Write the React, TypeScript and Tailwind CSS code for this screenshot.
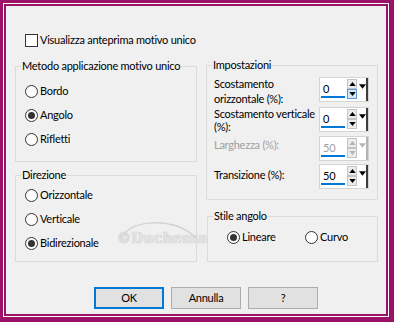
import type { ReactNode } from 'react'

function Radio({ label, checked = false, className = '' }: { label: string; checked?: boolean; className?: string }) {
  return (
    <div className={`flex h-[16px] items-center ${className}`}>
      <span className="flex h-[13px] w-[13px] shrink-0 items-center justify-center rounded-full border border-[#333333] bg-white">
        {checked && <span className="h-[7px] w-[7px] rounded-full bg-[#333333]" />}
      </span>
      <span className="ml-[2px] whitespace-nowrap leading-[16px]">{label}</span>
    </div>
  )
}

function Group({ title, className, children }: { title: string; className: string; children: ReactNode }) {
  return (
    <fieldset className={`min-w-0 border border-[#dcdcdc] ${className}`}>
      <legend className="ml-[5px] whitespace-nowrap px-[1px] leading-[16px]">{title}</legend>
      {children}
    </fieldset>
  )
}

function Spin({ value, disabled = false, hot = false }: { value: string; disabled?: boolean; hot?: boolean }) {
  const arrow = disabled ? 'fill-[#b4b4b4]' : 'fill-black'
  return (
    <div className="flex h-[25px] w-[50px] border border-[#d4d4d4] bg-white">
      <div className="flex w-[27px] flex-col pl-[1px] pt-[4px]">
        <span className={`pl-[2px] leading-[14px] ${disabled ? 'text-[#a0a0a0]' : 'text-black'}`}>{value}</span>
        <span className="mt-auto mb-[3px] h-[2px] w-[24px] bg-[#0078d7]" />
      </div>
      <div className="flex flex-col pl-[1px] pt-[1px]">
        <span className="flex h-[10px] w-[10px] items-center justify-center border border-[#c4c4c4] bg-[#ececec]">
          <svg viewBox="0 0 8 5" className={`h-[4px] w-[7px] ${arrow}`}>
            <path d="M4 0 8 5H0z" />
          </svg>
        </span>
        <span
          className={`flex h-[10px] w-[10px] items-center justify-center border ${
            hot ? 'border-[#5a9ad8] bg-[#d5e7f7]' : 'border-[#c4c4c4] bg-[#ececec]'
          }`}
        >
          <svg viewBox="0 0 8 5" className={`h-[4px] w-[7px] ${arrow}`}>
            <path d="M0 0h8L4 5z" />
          </svg>
        </span>
      </div>
      <div
        className={`ml-[1px] flex w-[10px] items-start justify-center border-r-2 pt-[6px] ${
          disabled ? 'border-[#b4b4b4]' : 'border-[#3c3c3c]'
        }`}
      >
        <svg viewBox="0 0 8 5" className={`h-[5px] w-[7px] ${arrow}`}>
          <path d="M0 0h8L4 5z" />
        </svg>
      </div>
    </div>
  )
}

function Button({ label, primary = false }: { label: string; primary?: boolean }) {
  return (
    <button
      type="button"
      className={`flex h-[22px] w-[70px] items-center justify-center bg-[#e1e1e1] leading-[16px] ${
        primary ? 'border-2 border-[#0078d7]' : 'border border-[#adadad]'
      }`}
    >
      {label}
    </button>
  )
}

export default function App() {
  return (
    <div className="h-[322px] w-[394px] bg-[#9a1167] pt-[3px] pl-[3px] pr-[5px] pb-[5px]">
      <div className="h-full w-full border border-white">
        <div className="h-full w-full border-2 border-[#9a1167]">
          <div className="relative flex h-full w-full flex-col bg-[#f0f0f0] pl-[9px] pr-[6px] pt-[26px] font-['Lato',sans-serif] text-[11px] tracking-[-0.25px] text-black">
            <div className="ml-[10px] flex h-[16px] items-center">
              <span className="h-[13px] w-[13px] border border-[#333333] bg-white" />
              <span className="ml-[2px] leading-[16px]">Visualizza anteprima motivo unico</span>
            </div>

            <div className="mt-[10px] flex gap-[9px]">
              <div className="flex w-[182px] flex-col gap-[5px]">
                <Group title="Metodo applicazione motivo unico" className="h-[104px]">
                  <div className="mt-[9px] flex flex-col gap-[8px] pl-[9px]">
                    <Radio label="Bordo" />
                    <Radio label="Angolo" checked />
                    <Radio label="Rifletti" />
                  </div>
                </Group>
                <Group title="Direzione" className="h-[95px]">
                  <div className="mt-[4px] flex flex-col gap-[8px] pl-[9px]">
                    <Radio label="Orizzontale" />
                    <Radio label="Verticale" />
                    <Radio label="Bidirezionale" checked />
                  </div>
                </Group>
              </div>

              <div className="-mt-[1px] flex w-[172px] flex-col gap-[8px]">
                <Group title="Impostazioni" className="h-[143px]">
                  <div className="flex flex-col pl-[7px] pr-[8px]">
                    <div className="mt-[3px] flex h-[26px] justify-between">
                      <span className="whitespace-nowrap leading-[15px]">
                        Scostamento
                        <br />
                        orizzontale (%):
                      </span>
                      <div className="mt-[1px]">
                        <Spin value="0" hot />
                      </div>
                    </div>
                    <div className="mt-[4px] flex h-[26px] justify-between">
                      <span className="mt-[1px] whitespace-nowrap leading-[13px]">
                        Scostamento verticale
                        <br />
                        (%):
                      </span>
                      <div className="mt-[1px]">
                        <Spin value="0" />
                      </div>
                    </div>
                    <div className="mt-[4px] flex h-[26px] justify-between">
                      <span className="mt-[1px] leading-[16px] text-[#a0a0a0]">Larghezza (%):</span>
                      <div>
                        <Spin value="50" disabled />
                      </div>
                    </div>
                    <div className="mt-[2px] flex h-[26px] justify-between">
                      <span className="mt-[3px] leading-[16px]">Transizione (%):</span>
                      <div>
                        <Spin value="50" />
                      </div>
                    </div>
                  </div>
                </Group>
                <Group title="Stile angolo" className="ml-[1px] h-[54px]">
                  <div className="mt-[5px] flex pl-[19px]">
                    <Radio label="Lineare" checked className="w-[78px]" />
                    <Radio label="Curvo" />
                  </div>
                </Group>
              </div>
            </div>

            <div className="mt-[25px] ml-[79px] flex gap-[7px]">
              <Button label="OK" primary />
              <Button label="Annulla" />
              <Button label="?" />
            </div>

            <div className="pointer-events-none absolute left-[111px] top-[210px] h-[32px] w-[80px]">
              <svg viewBox="0 0 80 32" className="absolute inset-0 h-full w-full">
                <path d="M7 19C15 4 56 1 78 21" fill="none" stroke="#d2d2d2" strokeWidth="1.5" />
              </svg>
              <span className="absolute left-[0px] top-[14px] font-['DejaVu_Serif',serif] text-[14px] font-bold leading-[16px] tracking-[0.2px] text-[#e4e4e4] [text-shadow:0_0_1px_#a8a8a8]">
                ©Duchessa
              </span>
            </div>
          </div>
        </div>
      </div>
    </div>
  )
}
